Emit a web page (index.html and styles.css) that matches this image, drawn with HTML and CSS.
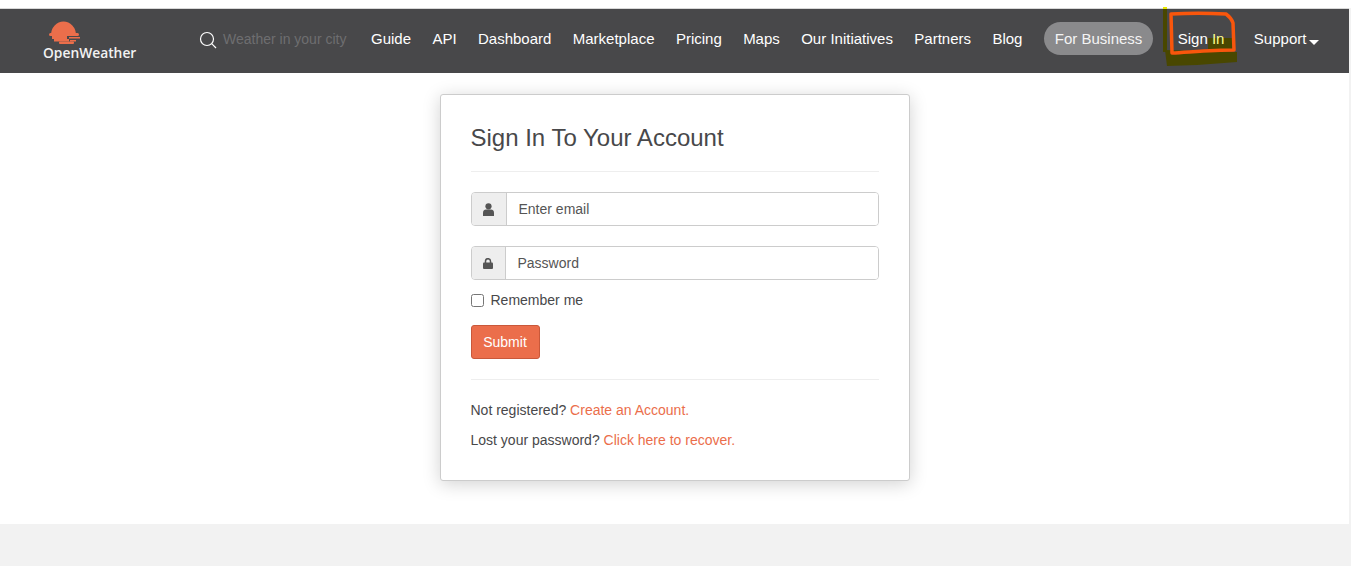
FILE: index.html
```html
<!DOCTYPE html>
<html lang="en">
<head>
  <meta charset="UTF-8">
  <meta name="viewport" content="width=device-width, initial-scale=1">
  <title>Sign In</title>
  <link rel="stylesheet" href="styles.css">
</head>
<body>
  <div class="page">
    <header class="topbar">
      <a class="logo" href="#">
        <svg class="logo-sun" width="32" height="24" viewBox="0 0 32 24" fill="#eb6e4b">
          <path d="M2 14A12.500 13.500 0 0 1 27 14z"/>
          <rect x="0" y="12" width="30" height="3" rx="1.500"/>
          <rect x="3" y="15" width="15" height="3"/>
          <rect x="20" y="16" width="11" height="1.500"/>
          <rect x="5" y="18" width="15" height="2.500"/>
          <rect x="21" y="19" width="6" height="1.500"/>
          <rect x="10" y="20.500" width="15" height="2.500" rx="1"/>
        </svg>
        <span class="logo-text">OpenWeather</span>
      </a>
      <div class="search">
        <svg width="18" height="18" viewBox="0 0 18 18" fill="none" stroke="#fff" stroke-width="1.200">
          <circle cx="8" cy="8" r="6.500"/>
          <path d="M12.700 12.700l4.300 4.300"/>
        </svg>
        <span class="search-hint">Weather in your city</span>
      </div>
      <nav class="menu">
        <a href="#">Guide</a>
        <a href="#">API</a>
        <a href="#">Dashboard</a>
        <a href="#">Marketplace</a>
        <a href="#">Pricing</a>
        <a href="#">Maps</a>
        <a href="#">Our Initiatives</a>
        <a href="#">Partners</a>
        <a href="#">Blog</a>
        <a class="pill" href="#">For Business</a>
        <a class="signin" href="#">Sign <span class="marked">In</span></a>
        <a class="support" href="#">Support<span class="caret"></span></a>
      </nav>
      <!-- marker scribble around the sign in link -->
      <svg class="scribble" width="76" height="60" viewBox="0 0 76 60" fill="none">
        <rect width="4" height="2" fill="#e8e800"/>
        <rect y="2" width="4" height="43" fill="#494700"/>
        <path d="M2 43l72 2v10l-40 3-30 1z" fill="#494700"/>
        <rect x="45" y="31" width="24" height="13" fill="#494700"/>
        <path d="M8 7C25 6 45 6 63 7 67 10 69 13 70 16L71 43C50 43 28 45 9 46z" stroke="#f9560c" stroke-width="3.500" stroke-linejoin="round"/>
      </svg>
    </header>

    <main class="content">
      <section class="card">
        <h1>Sign In To Your Account</h1>
        <hr class="rule rule-top">
        <form>
          <div class="field">
            <span class="addon addon-user">
              <svg width="11" height="13" viewBox="0 0 11 13"><circle cx="5.500" cy="3.300" r="3.100" fill="#555"/><path fill="#555" d="M0 13V9.500C0 7.500 1.500 6.500 3 6.500h5c1.500 0 3 1 3 3V13z"/></svg>
            </span>
            <input type="text" placeholder="Enter email">
          </div>
          <div class="field">
            <span class="addon">
              <svg width="10" height="11" viewBox="0 0 10 11"><path fill="none" stroke="#555" stroke-width="1.500" d="M2.500 5V3.200a2.500 2.500 0 0 1 5 0V5"/><rect y="4.500" width="10" height="6.500" rx="1" fill="#555"/></svg>
            </span>
            <input type="password" placeholder="Password">
          </div>
          <label class="remember"><input type="checkbox"> Remember me</label>
          <button class="submit" type="button">Submit</button>
        </form>
        <hr class="rule rule-bottom">
        <p class="note">Not registered? <a href="#">Create an Account.</a></p>
        <p class="note">Lost your password? <a href="#">Click here to recover.</a></p>
      </section>
    </main>
    <footer class="footer"></footer>
  </div>
</body>
</html>
```

FILE: styles.css
```css
html, body {
  margin: 0;
  height: 100%;
}
body {
  font-family: "Liberation Sans", Arial, sans-serif;
  font-size: 14px;
  color: #48484a;
  background: #fff;
  overflow: hidden;
}
a { text-decoration: none; }

.page {
  margin-top: 8px;
  background: #f2f2f2;
}

/* top bar */
.topbar {
  position: relative;
  display: flex;
  align-items: center;
  width: 1349px;
  height: 64px;
  border-top: 1px solid #d8d8d8;
  background: #48484a;
  color: #fff;
}
.logo {
  display: flex;
  flex-direction: column;
  align-items: flex-start;
  width: 94px;
  margin-left: 42px;
  color: #f2f2f2;
}
.logo-sun { margin-left: 7px; margin-top: -1px; }
.logo-text {
  font-family: "Open Sans", sans-serif;
  font-size: 13.800px;
  font-weight: 600;
  line-height: 17px;
  margin: -1px 0 0 1px;
}
.search {
  display: flex;
  align-items: center;
  gap: 6px;
  margin-left: 63px;
  padding-bottom: 4px;
  width: 172px;
  flex: none;
}
.search svg { margin-top: 1px; flex: none; }
.search-hint {
  font-size: 14px;
  color: #6e6e70;
  white-space: nowrap;
}
.menu {
  position: relative;
  z-index: 1;
  display: flex;
  align-items: center;
  gap: 21.400px;
  padding-bottom: 6px;
  font-size: 15px;
  white-space: nowrap;
}
.menu a { color: #fff; }
.menu .pill {
  background: #8a8a8c;
  border-radius: 17px;
  padding: 8px 11px;
  line-height: 17px;
  color: #f4f4f4;
  margin-right: 3px;
}
.menu .marked { color: #fbfb8c; }
.menu .support { margin-left: 8px; }
.caret {
  display: inline-block;
  margin-left: 3px;
  vertical-align: -1px;
  border-top: 5px solid #fff;
  border-left: 5px solid transparent;
  border-right: 5px solid transparent;
}
.scribble {
  position: absolute;
  left: 1163px;
  top: -2px;
}

/* sign in card */
.content {
  background: #fff;
  width: 1349px;
  height: 451px;
  padding-top: 21px;
  box-sizing: border-box;
}
.card {
  box-sizing: border-box;
  width: 470px;
  height: 387px;
  margin: 0 auto;
  padding: 27px 30px 0;
  background: #fff;
  border: 1px solid #ccc;
  border-radius: 3px;
  box-shadow: 0 3px 18px rgba(0, 0, 0, .18);
}
.card h1 {
  margin: 0;
  font-size: 24px;
  font-weight: 400;
  line-height: 32px;
  color: #48484a;
}
.rule {
  border: 0;
  border-top: 1px solid #eee;
  margin: 0;
}
.rule-top { margin-top: 17px; margin-bottom: 20px; }
.rule-bottom { margin-top: 20px; margin-bottom: 20px; }

.field {
  display: flex;
  height: 34px;
  margin-bottom: 20px;
  box-sizing: border-box;
  border: 1px solid #ccc;
  border-radius: 4px;
  overflow: hidden;
}
.addon {
  display: flex;
  align-items: center;
  justify-content: center;
  width: 33px;
  flex: none;
  background: #eee;
  border-right: 1px solid #ccc;
}
.addon-user { width: 34px; }
.field input {
  flex: 1;
  min-width: 0;
  border: 0;
  padding: 0 12px;
  font: 14px "Liberation Sans", Arial, sans-serif;
  color: #555;
}
.field input::placeholder { color: #555; opacity: 1; }

.remember {
  display: flex;
  align-items: center;
  gap: 7px;
  height: 20px;
  margin-top: -10px;
}
.remember input {
  width: 13px;
  height: 13px;
  margin: 0;
}
.submit {
  display: block;
  width: 69px;
  height: 34px;
  margin-top: 15px;
  padding: 0;
  font: 14px "Liberation Sans", Arial, sans-serif;
  color: #fff;
  background: #eb6e4b;
  border: 1px solid #c9583a;
  border-radius: 3px;
}
.note {
  margin: 0 0 10px;
  line-height: 20px;
}
.note a { color: #eb6e4b; }

.footer {
  height: 42px;
  background: #f2f2f2;
}
```
